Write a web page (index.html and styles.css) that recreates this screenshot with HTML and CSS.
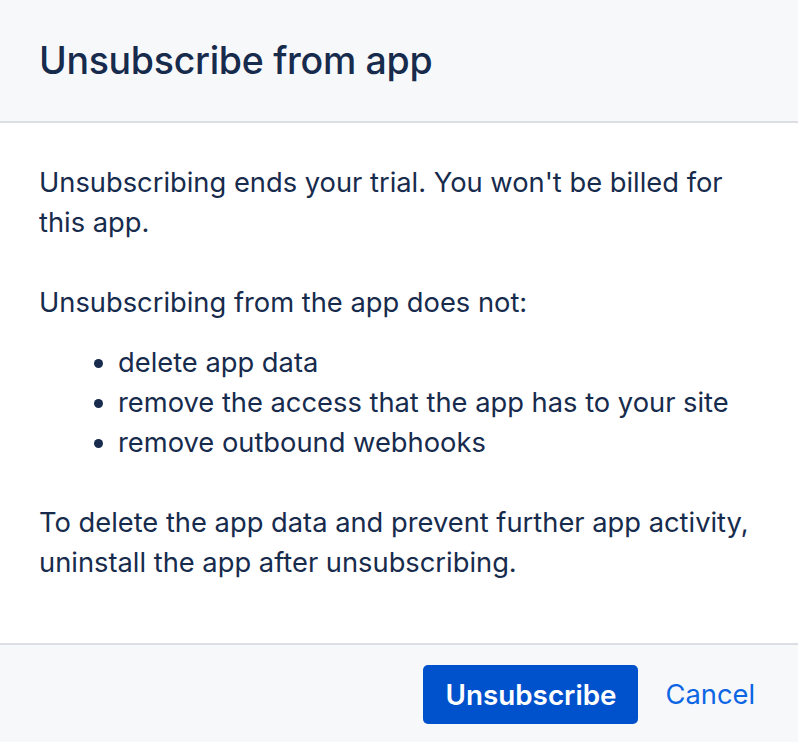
FILE: index.html
```html
<!DOCTYPE html>
<html lang="en">
<head>
<meta charset="utf-8">
<title>Unsubscribe from app</title>
<link rel="stylesheet" href="styles.css">
</head>
<body>
<div class="modal">
  <header class="modal-header">
    <h1 class="modal-title">Unsubscribe from app</h1>
  </header>
  <section class="modal-body">
    <p class="para">Unsubscribing ends your trial. You won't be billed for this app.</p>
    <p class="para">Unsubscribing from the app does not:</p>
    <ul class="list">
      <li>delete app data</li>
      <li>remove the access that the app has to your site</li>
      <li>remove outbound webhooks</li>
    </ul>
    <p class="para">To delete the app data and prevent further app activity, uninstall the app after unsubscribing.</p>
  </section>
  <footer class="modal-footer">
    <button class="btn btn-primary" type="button">Unsubscribe</button>
    <button class="btn btn-link" type="button">Cancel</button>
  </footer>
</div>
</body>
</html>
```

FILE: styles.css
```css
html, body {
  margin: 0;
  padding: 0;
  background: #ffffff;
}

body {
  font-family: Inter, "Noto Sans", "Liberation Sans", sans-serif;
  color: #172b4d;
  width: 798px;
  height: 742px;
  overflow: hidden;
}

.modal {
  display: flex;
  flex-direction: column;
  height: 742px;
}

.modal-header {
  height: 121px;
  background: #f7f8fa;
  border-bottom: 2px solid #dcdee3;
  display: flex;
  align-items: center;
  padding: 0 39px;
  box-sizing: content-box;
}

.modal-title {
  margin: 0;
  font-size: 37.5px;
  font-weight: 500;
  letter-spacing: -0.3px;
  line-height: 48px;
  color: #172b4d;
}

.modal-body {
  height: 520px;
  padding: 40px 39px 0;
  box-sizing: border-box;
  font-size: 27.3px;
  line-height: 40px;
}

.para {
  margin: 0 0 40px;
}

.list {
  margin: -20px 0 40px;
  padding-left: 79px;
}

.list li {
  line-height: 40px;
}

.modal-footer {
  flex: 1;
  background: #f7f8fa;
  border-top: 2px solid #dcdee3;
  display: flex;
  justify-content: flex-end;
  align-items: flex-start;
  padding: 20px 31px 0 0;
  gap: 15px;
}

.btn {
  font-family: inherit;
  border: none;
  cursor: pointer;
  font-size: 27.3px;
  line-height: 40px;
  height: 59px;
  border-radius: 5px;
}

.btn-primary {
  background: #0052cc;
  color: #ffffff;
  font-weight: 600;
  font-size: 27.8px;
  padding: 0;
  width: 215px;
}

.btn-link {
  background: transparent;
  color: #0c66e4;
  padding: 0 12px;
}
```
